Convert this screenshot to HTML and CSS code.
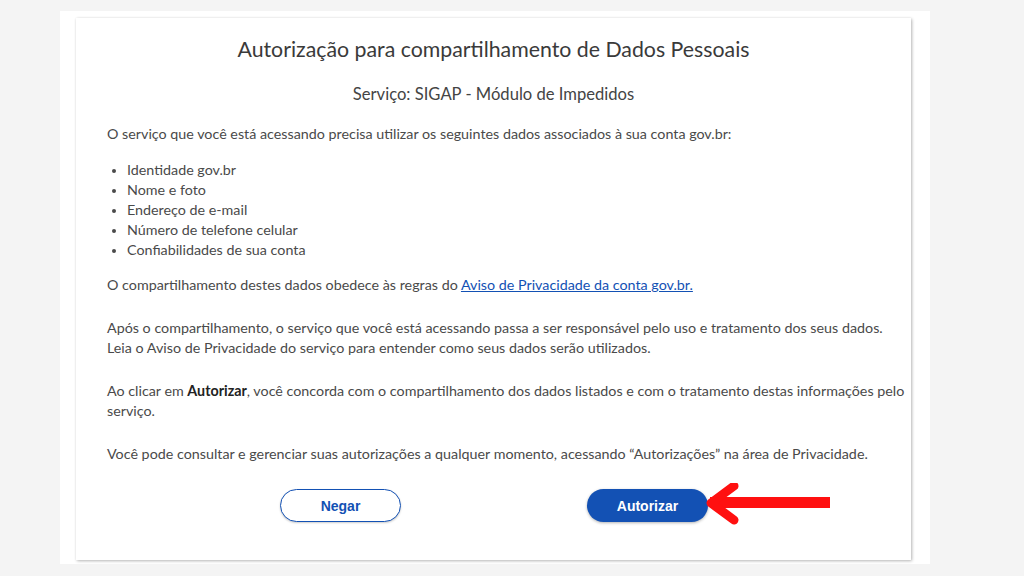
FILE: index.html
```html
<!DOCTYPE html>
<html lang="pt-BR">
<head>
<meta charset="utf-8">
<title>Autorização para compartilhamento de Dados Pessoais</title>
<link rel="stylesheet" href="styles.css">
</head>
<body>
<div class="panel">
  <main class="card">
    <h1 class="title">Autorização para compartilhamento de Dados Pessoais</h1>
    <h2 class="subtitle">Serviço: SIGAP - Módulo de Impedidos</h2>
    <p class="text tight">O serviço que você está acessando precisa utilizar os seguintes dados associados à sua conta gov.br:</p>
    <ul class="data-list">
      <li>Identidade gov.br</li>
      <li>Nome e foto</li>
      <li>Endereço de e-mail</li>
      <li>Número de telefone celular</li>
      <li>Confiabilidades de sua conta</li>
    </ul>
    <p class="text">O compartilhamento destes dados obedece às regras do <a class="link" href="#">Aviso de Privacidade da conta gov.br.</a></p>
    <p class="text">Após o compartilhamento, o serviço que você está acessando passa a ser responsável pelo uso e tratamento dos seus dados.<br>Leia o Aviso de Privacidade do serviço para entender como seus dados serão utilizados.</p>
    <p class="text">Ao clicar em <strong>Autorizar</strong>, você concorda com o compartilhamento dos dados listados e com o tratamento destas informações pelo serviço.</p>
    <p class="text">Você pode consultar e gerenciar suas autorizações a qualquer momento, acessando “Autorizações” na área de Privacidade.</p>
    <div class="actions">
      <button class="btn btn-secondary" type="button">Negar</button>
      <div class="primary-wrap">
        <button class="btn btn-primary" type="button">Autorizar</button>
        <svg class="arrow" width="130" height="44" viewBox="0 0 130 44" aria-hidden="true">
          <path d="M4 19.5 H124" stroke="#ff1010" stroke-width="11" fill="none"/>
          <path d="M28 3 L5 20 L28 37" stroke="#ff1010" stroke-width="9" fill="none" stroke-linecap="round" stroke-linejoin="round"/>
        </svg>
      </div>
    </div>
  </main>
</div>
</body>
</html>
```
FILE: styles.css
```css
* { box-sizing: border-box; }
html, body { margin: 0; padding: 0; }
body {
  background: #f4f4f4;
  width: 1024px;
  height: 576px;
  overflow: hidden;
  font-family: Lato, "Open Sans", sans-serif;
  color: #4a4a4a;
}
.panel {
  margin: 11px 0 0 60px;
  width: 870px;
  height: 553px;
  background: #ffffff;
  padding: 7px 19px 0 16px;
}
.card {
  background: #ffffff;
  height: 542px;
  padding: 19px 0 0 31px;
  box-shadow: 1px 1px 3px rgba(0,0,0,0.28), 0 0 2px rgba(0,0,0,0.06);
}
.title {
  margin: 0 31px 0 0;
  font-weight: 400;
  font-size: 21.3px;
  line-height: 24px;
  text-align: center;
  color: #3a3a3a;
}
.subtitle {
  margin: 22px 31px 0 0;
  font-weight: 400;
  font-size: 16.6px;
  line-height: 22px;
  text-align: center;
  color: #444;
}
.text {
  margin: 0 0 23px;
  font-size: 14.3px;
  line-height: 20px;
}
.subtitle + .text { margin-top: 19px; }
.text.tight { margin-bottom: 16px; }
.data-list {
  margin: 0 0 15px;
  padding-left: 20px;
  font-size: 14.3px;
  line-height: 20px;
}
.data-list li::marker { font-size: 12px; }
.link { color: #1351b4; text-decoration: underline; }
strong { font-weight: 700; color: #222; }
.actions {
  display: flex;
  align-items: center;
  margin-top: 25px;
  padding-left: 173px;
}
.btn {
  width: 121px;
  height: 33px;
  border-radius: 17px;
  font-family: "Liberation Sans", Arial, sans-serif;
  font-weight: 700;
  font-size: 14px;
  cursor: pointer;
}
.btn-secondary {
  background: #fff;
  color: #1351b4;
  border: 1px solid #1351b4;
  box-shadow: 0 1px 2px rgba(0,0,0,0.2);
}
.primary-wrap {
  position: relative;
  margin-left: 186px;
}
.btn-primary {
  background: #1351b4;
  color: #fff;
  border: none;
  box-shadow: 0 1px 3px rgba(0,0,0,0.3);
  display: block;
}
.arrow {
  position: absolute;
  left: 119px;
  top: -6px;
}
```
